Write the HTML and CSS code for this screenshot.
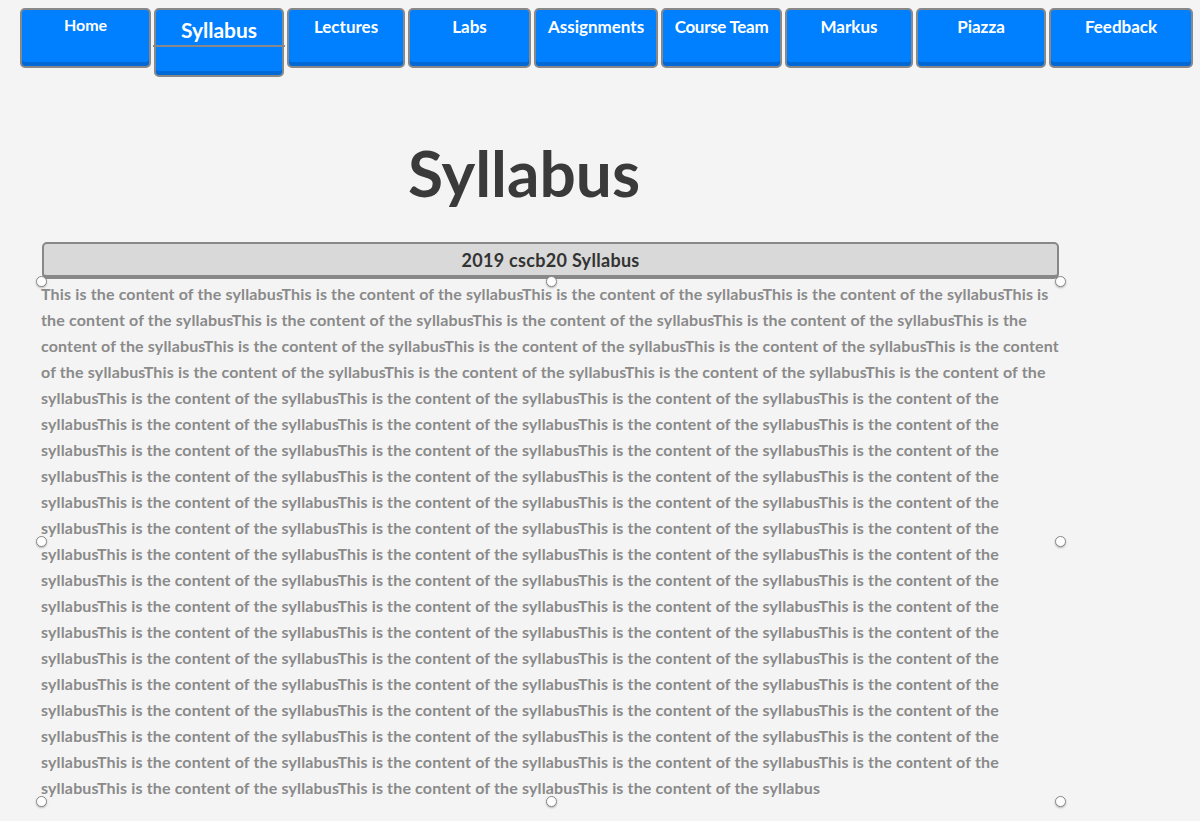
FILE: index.html
```html
<!DOCTYPE html>
<html>
<head>
<meta charset="utf-8">
<title>Syllabus</title>
<link rel="stylesheet" href="styles.css">
</head>
<body>
<nav class="nav">
  <a class="btn btn-home" href="#">Home</a>
  <a class="btn btn-active" href="#"><span class="btn-top">Syllabus</span></a>
  <a class="btn" href="#">Lectures</a>
  <a class="btn" href="#">Labs</a>
  <a class="btn" href="#">Assignments</a>
  <a class="btn btn-tight" href="#">Course Team</a>
  <a class="btn" href="#">Markus</a>
  <a class="btn" href="#">Piazza</a>
  <a class="btn" href="#">Feedback</a>
</nav>
<h1 class="title">Syllabus</h1>
<main class="main">
  <div class="bar">2019 cscb20 Syllabus</div>
  <div class="content">
    <p class="text" id="text"></p>
    <span class="handle h-tl"></span>
    <span class="handle h-tc"></span>
    <span class="handle h-tr"></span>
    <span class="handle h-ml"></span>
    <span class="handle h-mr"></span>
    <span class="handle h-bl"></span>
    <span class="handle h-bc"></span>
    <span class="handle h-br"></span>
  </div>
</main>
<script>
  var s = "";
  for (var i = 0; i < 80; i++) s += "This is the content of the syllabus";
  document.getElementById("text").textContent = s;
</script>
</body>
</html>
```
FILE: styles.css
```css
html, body {
  margin: 0;
  padding: 0;
  background: #f4f4f4;
}
body {
  font-family: "Lato", "Open Sans", sans-serif;
  min-height: 821px;
}
.nav {
  display: grid;
  grid-template-columns: 131px 130px 118px 123px 124px 121px 128px 130px 144px;
  column-gap: 3px;
  align-items: start;
  padding: 8px 0 0 20px;
}
.btn {
  box-sizing: border-box;
  height: 60px;
  border: 2px solid #888;
  border-radius: 5px;
  background: #007fff;
  box-shadow: inset 0 -4px 0 #0069d6;
  color: #fff;
  font-weight: 700;
  font-size: 17px;
  text-align: center;
  text-decoration: none;
  padding-top: 7px;
  line-height: 20px;
  white-space: nowrap;
}
.btn-home {
  font-size: 16px;
  padding-top: 5px;
}
.btn-tight {
  letter-spacing: -0.3px;
}
.btn-active {
  height: 69px;
  padding-top: 0;
  font-size: 21px;
}
.btn-top {
  display: block;
  height: 35px;
  line-height: 40px;
  margin: 0 -3px;
  border-bottom: 2px solid #888;
}
.title {
  width: 1048px;
  margin: 63px 0 0 0;
  text-align: center;
  font-size: 64px;
  line-height: 66px;
  font-weight: 700;
  color: #3a3a3a;
}
.main {
  width: 1019px;
  margin: 36px 0 0 41px;
}
.bar {
  box-sizing: border-box;
  width: 1017px;
  height: 37px;
  margin-left: 1px;
  border: 2px solid #888;
  border-bottom-width: 4px;
  border-radius: 5px;
  background: #d9d9d9;
  color: #333;
  font-weight: 700;
  font-size: 18px;
  letter-spacing: 0.3px;
  line-height: 32px;
  text-align: center;
}
.content {
  position: relative;
  margin-top: 2px;
  height: 520px;
}
.text {
  width: 1022px;
  margin: 0;
  font-size: 16px;
  line-height: 26px;
  font-weight: 700;
  letter-spacing: 0.15px;
  color: #8a8a8a;
}
.handle {
  position: absolute;
  z-index: 2;
  box-sizing: border-box;
  width: 11px;
  height: 11px;
  border: 1px solid #888;
  border-radius: 50%;
  background: #fff;
  box-shadow: 0 1px 2px rgba(0,0,0,0.25);
  margin: -5px 0 0 -5px;
}
.h-tl { left: 0; top: 0; }
.h-tc { left: 510px; top: 0; }
.h-tr { left: 1019px; top: 0; }
.h-ml { left: 0; top: 260px; }
.h-mr { left: 1019px; top: 260px; }
.h-bl { left: 0; top: 520px; }
.h-bc { left: 510px; top: 520px; }
.h-br { left: 1019px; top: 520px; }
```
